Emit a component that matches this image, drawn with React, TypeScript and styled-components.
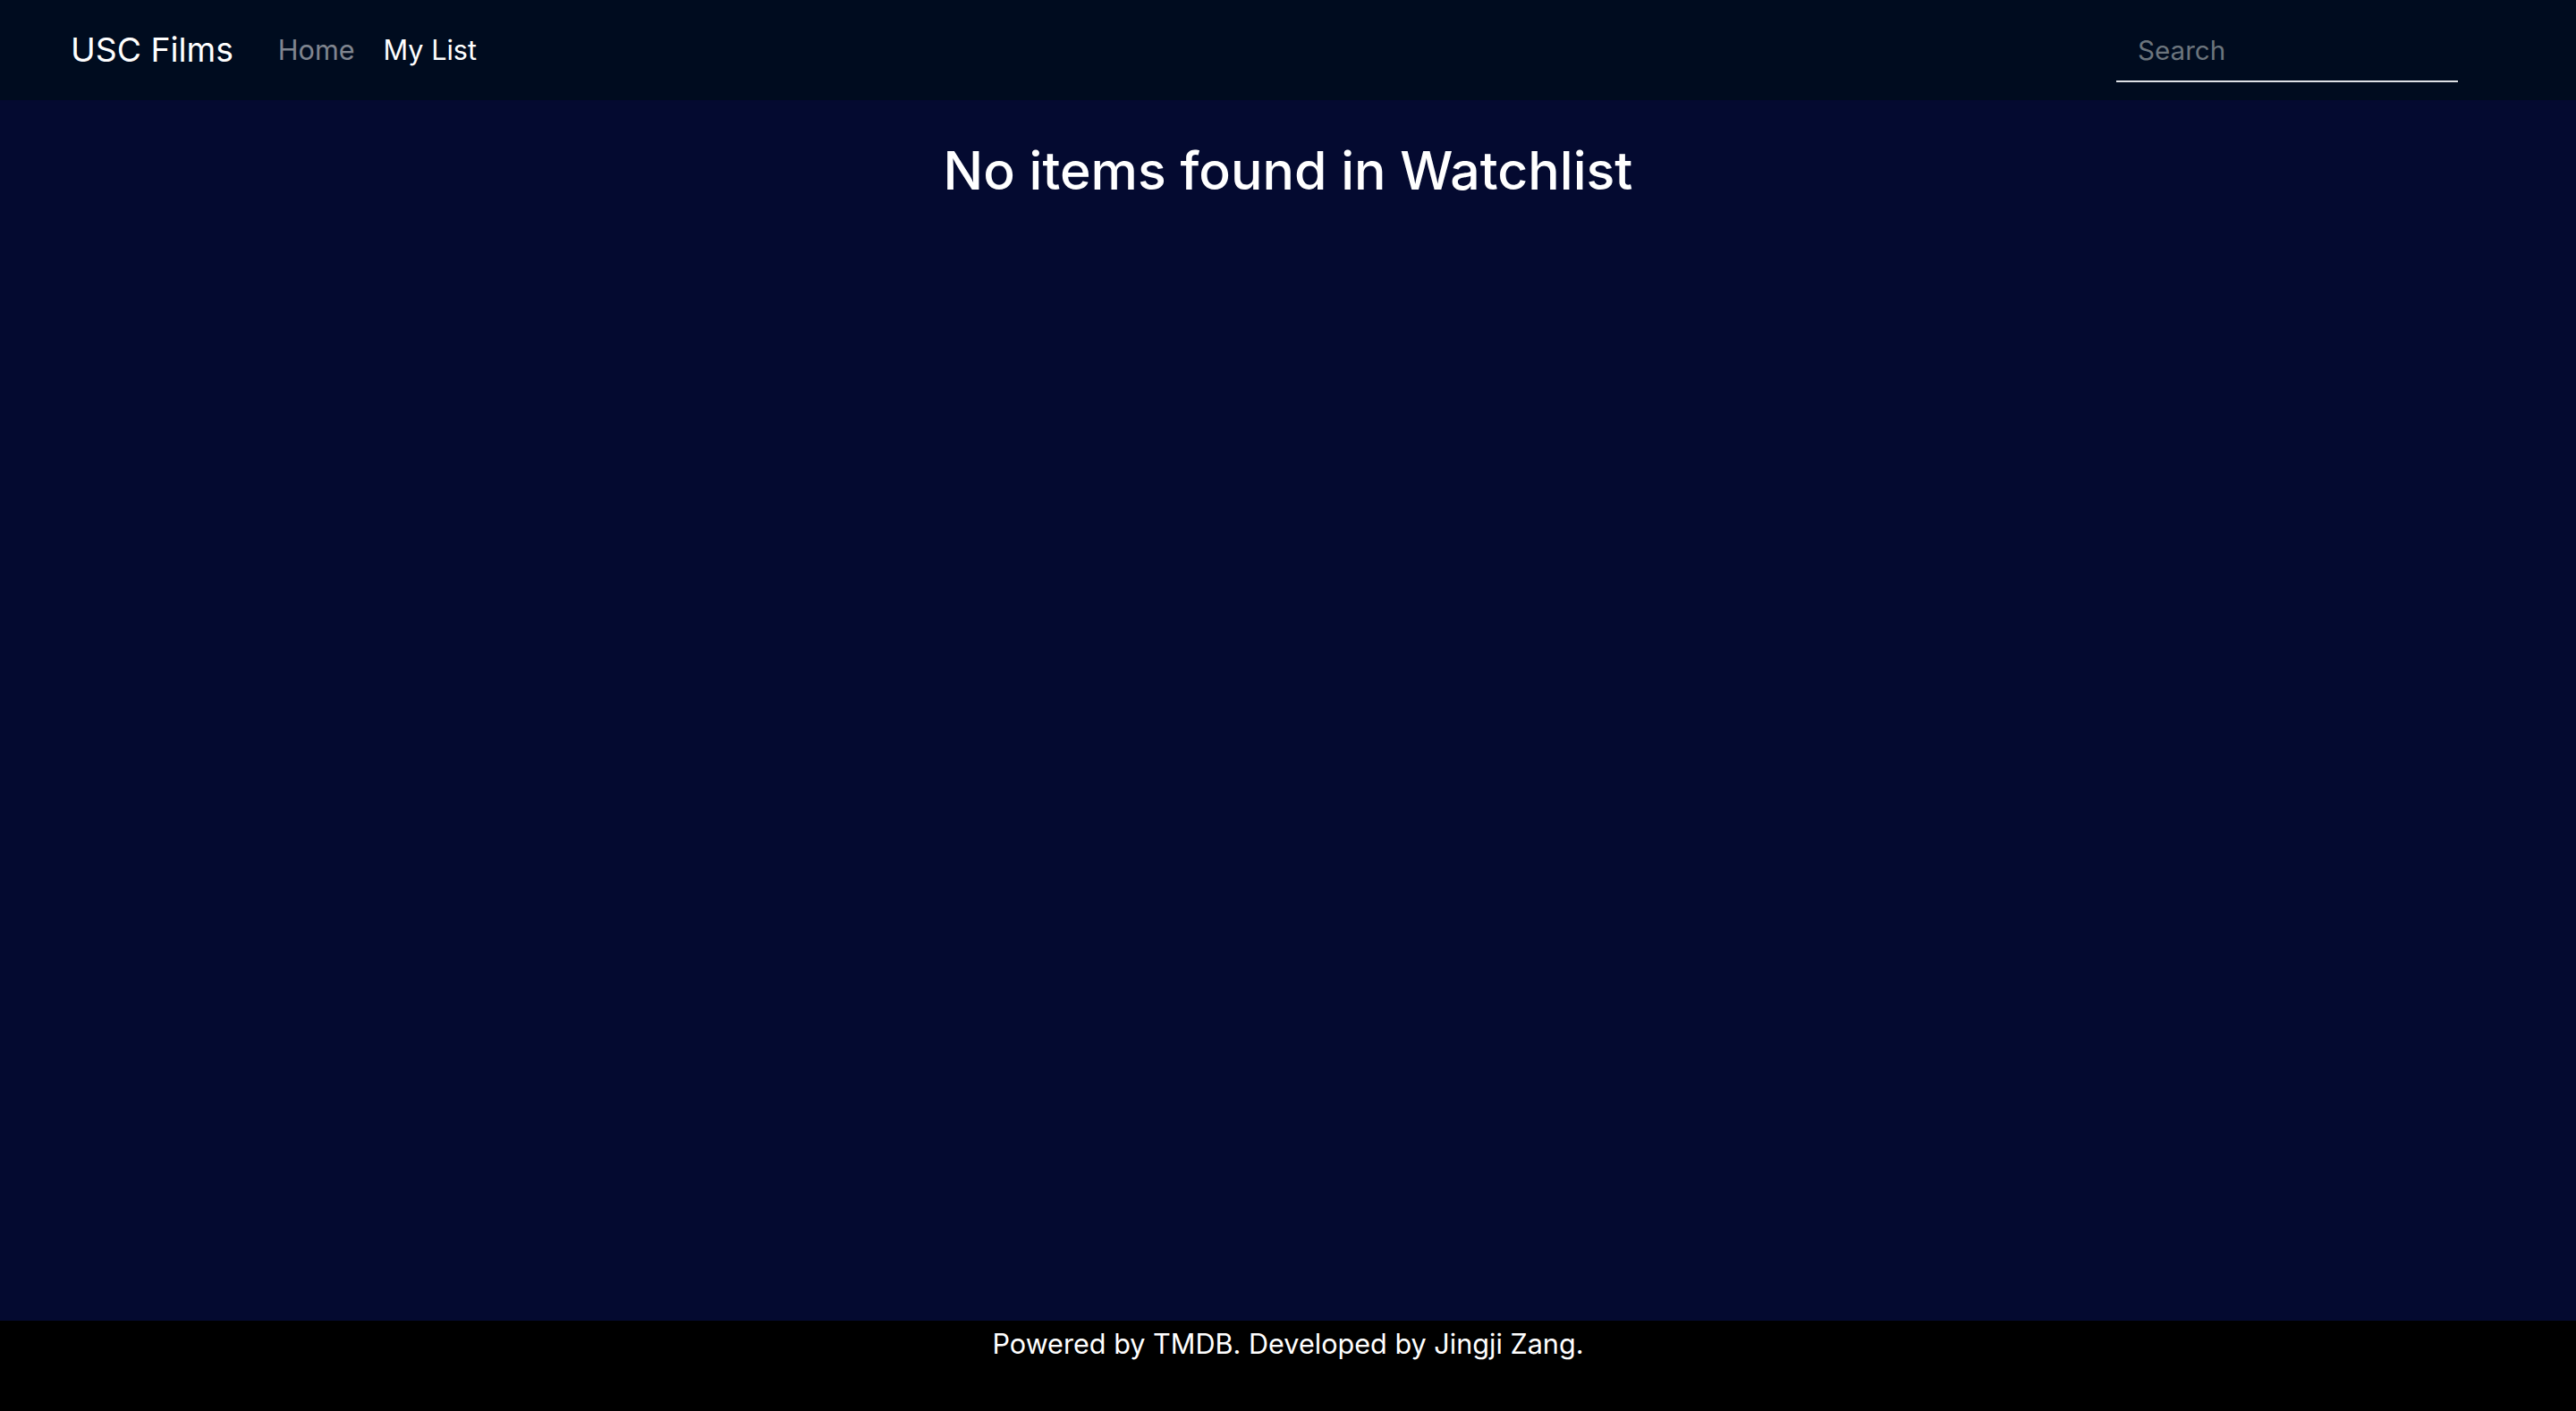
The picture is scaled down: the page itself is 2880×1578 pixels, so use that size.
import React from "react";
import styled, { createGlobalStyle } from "styled-components";

const Global = createGlobalStyle`
  html, body { margin: 0; padding: 0; }
  body {
    font-family: Inter, "Liberation Sans", "Noto Sans", sans-serif;
    background: #040a30;
    color: #ffffff;
  }
  * { box-sizing: border-box; }
`;

const Page = styled.div`
  display: flex;
  flex-direction: column;
  min-height: 100vh;
`;

const NavBar = styled.nav`
  height: 112px;
  background: #000c1f;
  display: flex;
  align-items: center;
  padding: 0 132px 0 79px;
`;

const Brand = styled.a`
  font-size: 37.3px;
  color: #ffffff;
  text-decoration: none;
  margin-right: 34px;
  line-height: 1.2;
`;

const NavList = styled.div`
  display: flex;
  align-items: center;
  flex: 1;
`;

const NavLink = styled.a<{ $active?: boolean }>`
  font-size: 30.6px;
  padding: 0 16px;
  color: ${(p) => (p.$active ? "#ffffff" : "rgba(255,255,255,0.5)")};
  text-decoration: none;
  line-height: 1.5;
`;

const SearchBox = styled.input`
  width: 382px;
  height: 68px;
  margin-top: 4px;
  background: transparent;
  border: none;
  border-bottom: 2px solid #dee2e6;
  color: #ffffff;
  font-family: inherit;
  font-size: 29.6px;
  padding: 0 24px 2px;
  outline: none;
  &::placeholder { color: #6c757d; }
`;

const Main = styled.main`
  flex: 1;
  background: #040a30;
  padding-top: 44px;
`;

const Title = styled.h2`
  margin: 0;
  text-align: center;
  font-size: 59px;
  font-weight: 500;
  line-height: 1.2;
`;

const Footer = styled.footer`
  height: 101px;
  background: #000000;
  text-align: center;
  font-size: 30.6px;
  line-height: 1.5;
  padding-top: 3px;
`;

export default function App() {
  return (
    <Page>
      <Global />
      <NavBar>
        <Brand href="#">USC Films</Brand>
        <NavList>
          <NavLink href="#">Home</NavLink>
          <NavLink href="#" $active>My List</NavLink>
        </NavList>
        <SearchBox placeholder="Search" />
      </NavBar>
      <Main>
        <Title>No items found in Watchlist</Title>
      </Main>
      <Footer>Powered by TMDB. Developed by Jingji Zang.</Footer>
    </Page>
  );
}
